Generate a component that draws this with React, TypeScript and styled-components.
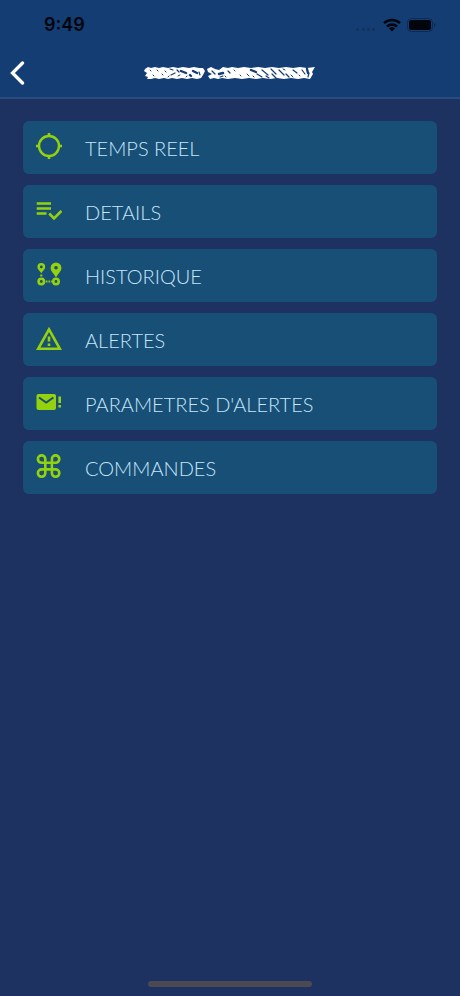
import React from "react";
import styled, { createGlobalStyle } from "styled-components";

const GlobalStyle = createGlobalStyle`
  *, *::before, *::after { box-sizing: border-box; }
  body { margin: 0; background: #1d3261; }
`;

const Screen = styled.div`
  min-height: 100vh;
  display: flex;
  flex-direction: column;
  background: #1d3261;
  font-family: Lato, "Liberation Sans", sans-serif;
`;

const Header = styled.header`
  background: #143d73;
  border-bottom: 2px solid #2b4a80;
`;

const StatusBar = styled.div`
  display: flex;
  align-items: center;
  justify-content: space-between;
  height: 50px;
  padding: 0 24px 0 44px;
  color: #02060c;
`;

const Clock = styled.time`
  font: 600 18px/24px Inter, "Liberation Sans", sans-serif;
`;

const StatusIcons = styled.div`
  display: flex;
  align-items: center;
  gap: 6px;
`;

const NavBar = styled.div`
  display: grid;
  grid-template-columns: 40px 1fr 40px;
  align-items: center;
  height: 47px;
  padding-bottom: 2px;
`;

const BackButton = styled.button`
  display: flex;
  align-items: center;
  height: 44px;
  padding: 0 0 0 10px;
  border: 0;
  background: none;
  color: #fff;
  cursor: pointer;
`;

const Title = styled.h1`
  display: flex;
  justify-content: center;
  margin: 0;
`;

const Menu = styled.nav`
  flex: 1;
  display: flex;
  flex-direction: column;
  gap: 11px;
  padding: 22px 23px;
`;

const MenuItem = styled.button`
  display: flex;
  align-items: center;
  gap: 23px;
  width: 100%;
  height: 53px;
  padding: 0 13px;
  border: 0;
  border-radius: 6px;
  background: #184f76;
  color: #c6e6fa;
  font: 300 20px/28px Lato, "Liberation Sans", sans-serif;
  text-align: left;
  cursor: pointer;
`;

const IconSlot = styled.span`
  display: flex;
  padding-bottom: 4px;
  color: #93d20c;
`;

const HomeArea = styled.footer`
  display: flex;
  justify-content: center;
  padding-bottom: 9px;
`;

const HomeBar = styled.div`
  width: 164px;
  height: 6px;
  border-radius: 3px;
  background: #4b4a53;
`;

function Icon({ children }: { children: React.ReactNode }) {
  return (
    <svg width="26" height="26" viewBox="0 0 26 26" fill="none" stroke="currentColor" strokeWidth="2.6" aria-hidden="true">
      {children}
    </svg>
  );
}

const items = [
  {
    label: "TEMPS REEL",
    icon: (
      <>
        <circle cx="13" cy="13" r="10" strokeWidth="2.4" />
        <path d="M13 0v4M13 22v4M0 13h4M22 13h4" />
      </>
    ),
  },
  {
    label: "DETAILS",
    icon: <path d="M.7 6.5H15M.7 11.5H15M.7 16.5H10.5M13.2 16.5l4.800 5 7.400-7.600" />,
  },
  {
    label: "HISTORIQUE",
    icon: (
      <>
        <path
          fill="currentColor"
          fillRule="evenodd"
          stroke="none"
          d="M5.300 2a3.900 3.900 0 0 1 3.900 3.900c0 2.400-2.300 3.800-3.900 6.300-1.600-2.500-3.900-3.900-3.900-6.300A3.900 3.900 0 0 1 5.300 2Zm0 2.500a1.400 1.400 0 1 0 0 2.800 1.400 1.400 0 0 0 0-2.800ZM20 1.500a5.400 5.400 0 0 1 5.400 5.400c0 3.500-3.600 5.800-5.400 9.700-1.800-3.900-5.400-6.200-5.400-9.700A5.400 5.400 0 0 1 20 1.500Zm0 3.500a1.800 1.800 0 1 0 0 3.600 1.800 1.800 0 0 0 0-3.600Z"
        />
        <circle cx="5.300" cy="20.500" r="2.700" />
        <circle cx="20" cy="20.500" r="2.700" />
        <path strokeWidth="2" d="M5.300 13.500v2M9.800 20.500h1.700M12.500 20.500h1.700M15.200 20.500h1.500" />
      </>
    ),
  },
  {
    label: "ALERTES",
    icon: (
      <>
        <path d="M13 4.400 2.200 23.800h21.600Z" />
        <path d="M13 11.500v5M13 18.500v2.400" />
      </>
    ),
  },
  {
    label: "PARAMETRES D'ALERTES",
    icon: (
      <>
        <rect x=".5" y="5" width="19.500" height="16" rx="2" fill="currentColor" stroke="none" />
        <path stroke="#184f76" strokeWidth="2" d="m3 8.500 7.200 5 7.200-5" />
        <path strokeWidth="2.600" d="M23.700 7.500v6.500M23.700 16v2.600" />
      </>
    ),
  },
  {
    label: "COMMANDES",
    icon: (
      <path d="M9.500 9.800H5.600a3.700 3.700 0 1 1 3.700-3.700v14a3.700 3.700 0 1 1-3.700-3.700h14a3.700 3.700 0 1 1-3.700 3.700v-14a3.700 3.700 0 1 1 3.700 3.700H9.500" />
    ),
  },
];

function ScribbledName() {
  return (
    <svg width="172" height="16" viewBox="0 0 172 16" role="img" aria-label="Masked name">
      <path
        fill="#fff"
        d="M1 4L4 2L7 3L11 2L15 3L19 2L24 3L29 2L34 3L39 2L45 3L50 2L55 3L59 3L61 6L59 10L57 13L53 14L48 13L43 14L38 13L33 14L28 13L24 14L20 13L15 14L11 13L7 14L3 14L4 12L1 11L3 8L0 6Z"
      />
      <path
        fill="#fff"
        d="M63 4L67 2L71 4L75 5L79 2L84 3L88 2L94 3L100 2L107 3L114 2L121 3L128 2L135 3L142 2L149 3L156 2L163 3L171 2L168 7L169 9L166 14L160 13L154 14L147 13L140 14L133 13L126 14L119 13L112 14L105 13L98 14L91 13L84 14L78 13L74 14L70 13L66 14L64 11L68 9L64 7Z"
      />
      <g stroke="#143d73" strokeLinecap="round" fill="none">
        <path strokeWidth="2.400" d="M37 6L42 8M49 6L53 8M46 10L47 11M75 9L79 8M107 5L112 7M163 4L164 8" />
        <path
          strokeWidth="1.200"
          d="M26 4L29 5M27 10L31 8M33 5L35 7M55 7L56 10M68 6L71 9M76 12L79 11M84 6L86 8M113 9L118 12M118 5L124 10M122 11L125 13M127 4L132 9M128 9L132 13M135 5L140 10M142 9L145 12M149 5L153 8M158 5L161 9M165 8L164 12"
        />
        <path
          strokeWidth="1"
          d="M6 5L7 6M9 10L10 11M13 5L14 6M18 9L19 10M21 6L22 7M24 12L25 11M42 12L43 11M34 11L36 10M81 11L82 12M90 5L91 6M96 10L97 11M103 9L105 11M109 11L110 12M139 4L141 5M147 10L149 12M155 10L156 11"
        />
      </g>
    </svg>
  );
}

export default function App() {
  return (
    <Screen>
      <GlobalStyle />
      <Header>
        <StatusBar>
          <Clock>9:49</Clock>
          <StatusIcons>
            <svg width="21" height="16" viewBox="0 0 21 16" fill="#12335f" aria-hidden="true">
              <rect x="0" y="11" width="3" height="3" rx="1" />
              <rect x="6" y="11" width="3" height="3" rx="1" />
              <rect x="11" y="11" width="3" height="3" rx="1" />
              <rect x="16" y="11" width="3" height="3" rx="1" />
            </svg>
            <svg width="18" height="14" viewBox="0 0 18 14" fill="none" stroke="currentColor" strokeWidth="2.500" aria-hidden="true">
              <path d="M1 5.200a11.500 11.500 0 0 1 16 0M4 8.500a7.200 7.200 0 0 1 10 0" />
              <path fill="currentColor" stroke="none" d="m9 13.500-3-3a4.300 4.300 0 0 1 6 0Z" />
            </svg>
            <svg width="29" height="14" viewBox="0 0 29 14" aria-hidden="true">
              <rect x=".5" y=".5" width="25" height="13" rx="4" fill="none" stroke="#0d2a54" />
              <rect x="2" y="2" width="22" height="10" rx="2.500" fill="currentColor" />
              <path fill="#0d2a54" d="M27 5c2 .5 2 3.500 0 4Z" />
            </svg>
          </StatusIcons>
        </StatusBar>
        <NavBar>
          <BackButton aria-label="Retour">
            <svg width="15" height="24" viewBox="0 0 15 24" fill="none" stroke="currentColor" strokeWidth="3.300" aria-hidden="true">
              <path strokeLinecap="round" strokeLinejoin="miter" d="M12.500 2 2.500 12l10 10" />
            </svg>
          </BackButton>
          <Title>
            <ScribbledName />
          </Title>
        </NavBar>
      </Header>
      <Menu>
        {items.map((item) => (
          <MenuItem key={item.label}>
            <IconSlot>
              <Icon>{item.icon}</Icon>
            </IconSlot>
            {item.label}
          </MenuItem>
        ))}
      </Menu>
      <HomeArea>
        <HomeBar />
      </HomeArea>
    </Screen>
  );
}
